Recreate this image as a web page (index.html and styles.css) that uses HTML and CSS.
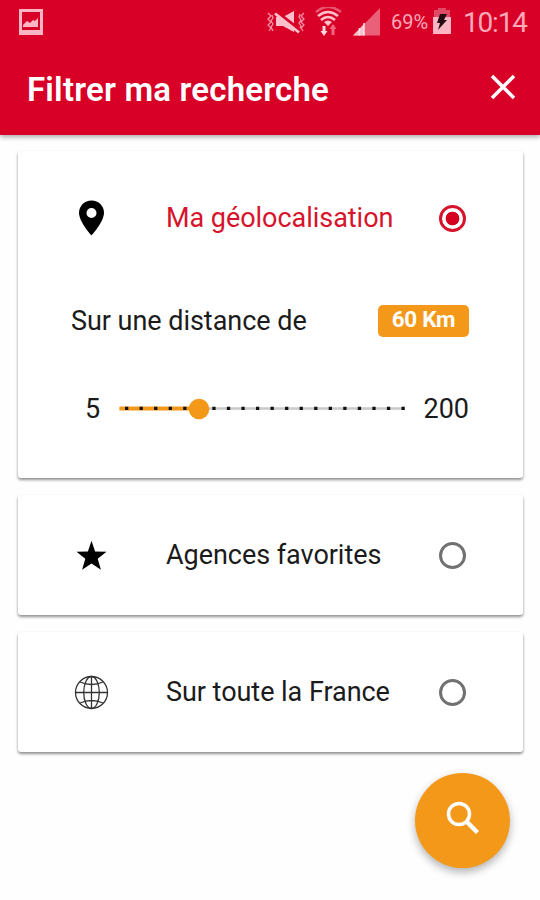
FILE: index.html
```html
<!DOCTYPE html>
<html lang="fr">
<head>
<meta charset="utf-8">
<title>Filtrer ma recherche</title>
<link rel="stylesheet" href="styles.css">
</head>
<body>
<header class="header">
  <div class="status">
    <svg class="status-picture" width="24" height="26" viewBox="0 0 24 26"><path fill="#ffb5c3" fill-rule="evenodd" d="M0 0h24v26H0zM3 3v18h18V3z"/><path fill="#ffb5c3" d="M4 18v-2l4-4 3 2 3-3 2 1 3-3v9z"/></svg>
    <svg class="status-icons" width="116" height="30" viewBox="266 6 116 30" fill="none">
      <path d="M268 12l3 3-3 3 3 3-3 3 3 3-2 3M272 14l1 3-2 3 2 3-2 3 2 4M300 13l-1 3 2 3-2 3 2 3-2 4M304 12l-3 3 3 3-3 3 3 3-3 3 2 3" stroke="#f590a4" stroke-width="1.300"/>
      <path d="M276 16h7l11-6v21l-11-6h-7z" fill="#ffc0cc"/>
      <path d="M275 9.500l25 19.500" stroke="#d80027" stroke-width="3"/><path d="M275 12.500l24 19" stroke="#ffc0cc" stroke-width="2.800"/>
      <path d="M316 11q12-10 25 0" stroke="#e85870" stroke-width="2.500"/>
      <path d="M318 15q10-8 20 0M321 19q7-6 14 0" stroke="#ffc0cc" stroke-width="2.500"/><path d="M324 21q4-3 8 0l-4 4z" fill="#ffc0cc"/>
      <path d="M322.500 25h3v5h2l-3.500 5-3.500-5h2z" fill="#ffd8df"/><path d="M331.500 34h3v-6h2l-3.500-5-3.500 5h2z" fill="#ee6680"/>
      <path d="M353 34.500L380 7v27.500z" fill="#ea6078"/><path d="M353 34.500L364 23v11.500z" fill="#ffc0cc"/><path d="M359.500 27v7.500M364 22v12.500" stroke="#ffe3e8" stroke-width="1.500"/>
    </svg>
    <span class="percent">69%</span>
    <svg class="battery" width="18" height="26" viewBox="0 0 18 26"><path fill="#e04a66" d="M5 0h8v2h4v7H1V2h4z"/><path fill="#ffb5c3" d="M0 9h18v17H0z"/><path fill="#240c10" d="M7 6h7l-3 6h3L5 22l2-7H4z"/></svg>
    <span class="clock">10:14</span>
  </div>
  <div class="titlebar">
    <h1 class="title">Filtrer ma recherche</h1>
    <svg class="close" width="26" height="26" viewBox="0 0 26 26"><path d="M2 2l22 22M24 2L2 24" stroke="#fff" stroke-width="3.500"/></svg>
  </div>
</header>
<main class="cards">
  <section class="card card-location">
    <div class="option selected">
      <svg class="icon" width="36" height="36" viewBox="0 0 36 36"><path fill-rule="evenodd" d="M18.500 .5C11.500 .5 6 6 6 12.800 6 22 18.500 35.500 18.500 35.500S31 22 31 12.800C31 6 25.500 .5 18.500 .5zm0 7.500a5 5 0 1 1 0 10 5 5 0 0 1 0-10z"/></svg>
      <span class="label">Ma géolocalisation</span>
      <span class="radio"></span>
    </div>
    <div class="distance"><span class="label">Sur une distance de</span><span class="badge">60 Km</span></div>
    <div class="range">
      <span class="min">5</span>
      <svg class="slider" width="288" height="24" viewBox="118 397 288 24">
        <path d="M119.500 408.500H405" stroke="#c9c9c9" stroke-width="2.600"/><path d="M119.500 408.500H200" stroke="#f49819" stroke-width="4"/>
        <path d="M125 408.300H406" stroke="#111" stroke-width="3.300" stroke-dasharray="3.300 11.250"/>
        <circle cx="199" cy="409" r="10.300" fill="#f49819"/>
      </svg>
      <span class="max">200</span>
    </div>
  </section>
  <section class="card">
    <div class="option">
      <svg class="icon" width="36" height="36" viewBox="0 0 36 36"><path d="M18.500 3.800l3.600 10.600 11.400.3-8.800 7 3.200 11-9.400-6.300-9.400 6.300 3.200-11-8.800-7 11.400-.3z"/></svg>
      <span class="label">Agences favorites</span>
      <span class="radio"></span>
    </div>
  </section>
  <section class="card">
    <div class="option">
      <svg class="icon" width="36" height="36" viewBox="0 0 36 36" fill="none" stroke="#333" stroke-width="1.300"><circle cx="18.500" cy="18.500" r="16"/><ellipse cx="18.500" cy="18.500" rx="7.800" ry="16"/><path d="M18.500 2.500v32M2.500 18.500h32M7 8q11.500 5 23 0M7 29q11.500-5 23 0"/></svg>
      <span class="label">Sur toute la France</span>
      <span class="radio"></span>
    </div>
  </section>
</main>
<div class="actions"><div class="search"><svg width="34" height="34" viewBox="0 0 34 34" fill="none" stroke="#fff"><circle cx="13" cy="13" r="10.500" stroke-width="3.500"/><path d="M20.500 20.500L31.500 31.500" stroke-width="4.500"/></svg></div></div>
</body>
</html>
```
FILE: styles.css
```css
* { box-sizing: border-box; }
body { margin: 0; height: 900px; overflow: hidden; background: #fefefe; font-family: Roboto, "Liberation Sans", sans-serif; color: #1b1b1b; }
svg { display: block; flex: none; }
.header { height: 135px; background: #d80027; box-shadow: 0 2px 5px rgba(0,0,0,.35); }
.status { display: flex; align-items: center; height: 43px; padding: 0 13px 0 19px; color: #fda9b9; }
.status-icons { margin-left: auto; }
.percent { width: 38px; margin-left: 9px; font-size: 20px; white-space: nowrap; }
.battery { margin: -1px 0 0 4px; }
.clock { width: 64px; margin-left: 12px; padding-top: 1px; font-size: 28px; letter-spacing: -1.2px; white-space: nowrap; }
.titlebar { display: flex; align-items: center; justify-content: space-between; height: 92px; padding: 0 24px 0 27px; }
.title { margin: 2px 0 0; color: #fff; font-size: 33px; font-weight: 600; letter-spacing: .2px; line-height: 40px; white-space: nowrap; }
.close { margin-top: -5px; }
.cards { display: flex; flex-direction: column; gap: 17px; padding: 16px 17px 0 18px; }
.card { height: 120px; padding: 0 57px 0 54px; background: #fff; border-radius: 3px; box-shadow: 0 2px 3px rgba(0,0,0,.4), 0 1px 3px rgba(0,0,0,.08); }
.card-location { height: 327px; padding-top: 7px; }
.option { display: flex; align-items: center; height: 120px; }
.icon { margin-left: 1px; }
.label { font-size: 27px; letter-spacing: -.04px; line-height: 32px; white-space: nowrap; }
.option .label { margin-left: 57px; }
.radio { width: 27px; height: 27px; margin-left: auto; border: 3px solid #717171; border-radius: 50%; }
.selected { color: #d6142b; }
.selected .icon { fill: #000; }
.selected .radio { border-color: #d6142b; background: radial-gradient(circle, #d6001f 0 6.5px, #fff 7.200px); }
.distance { display: flex; align-items: center; justify-content: space-between; height: 85px; margin-right: -3px; margin-left: -1px; }
.badge { width: 91px; height: 32px; background: #f49819; border-radius: 5px; color: #fff; font-size: 22.5px; font-weight: 700; letter-spacing: -.3px; line-height: 29px; text-align: center; }
.range { display: flex; align-items: center; height: 91px; margin-right: -3px; font-size: 27px; }
.min { width: 47px; padding-left: 13px; }
.max { margin-left: 17px; }
.actions { display: flex; justify-content: flex-end; padding: 21px 30px 0 0; }
.search { display: flex; align-items: center; justify-content: center; width: 95px; height: 95px; padding-bottom: 5px; border-radius: 50%; background: #f49819; box-shadow: 0 4px 8px rgba(0,0,0,.3); }
```
